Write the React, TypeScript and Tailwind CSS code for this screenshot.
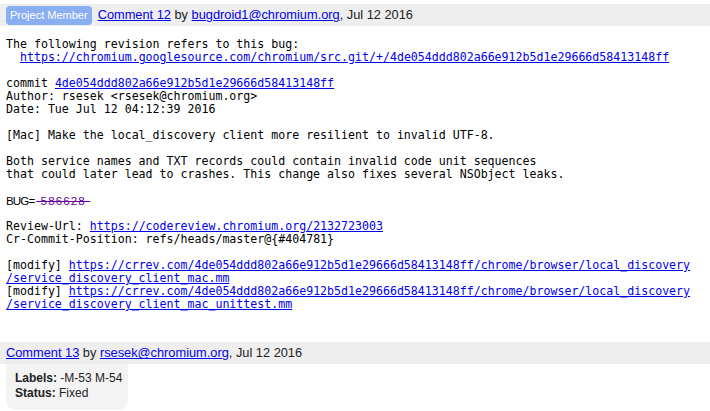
const mono = { fontFamily: '"DejaVu Sans Mono", monospace' }

function CommentHeader({
  number,
  author,
  badge,
}: {
  number: number
  author: string
  badge?: string
}) {
  return (
    <div className="flex h-[22px] items-center bg-[#eeeeee] px-[6px] text-[12.8px] text-[#222]">
      {badge && (
        <span className="mr-[6px] flex h-[19px] items-center rounded-[4px] bg-[#8aaef2] px-[4px] text-[11px] text-white">
          {badge}
        </span>
      )}
      <a href="#" className="text-[#0000ee] underline">
        Comment {number}
      </a>
      <span>&nbsp;by&nbsp;</span>
      <a href="#" className="text-[#0000ee] underline">
        {author}
      </a>
      <span>, Jul 12 2016</span>
    </div>
  )
}

function L({ children }: { children: React.ReactNode }) {
  return (
    <a href="#" className="text-[#0000ee] underline">
      {children}
    </a>
  )
}

export default function App() {
  const hash = '4de054ddd802a66e912b5d1e29666d58413148ff'
  return (
    <div
      className="h-[411px] w-[710px] overflow-hidden bg-white"
      style={{ fontFamily: '"Liberation Sans", Arial, sans-serif' }}
    >
      <div className="h-[4px]" />
      <CommentHeader number={12} author="bugdroid1@chromium.org" badge="Project Member" />
      <div
        className="px-[6px] pt-[12px] text-[11.6px] leading-[13px] whitespace-pre text-black"
        style={mono}
      >
        <div>The following revision refers to this bug:</div>
        <div>
          {'  '}
          <L>https://chromium.googlesource.com/chromium/src.git/+/{hash}</L>
        </div>
        <div>&nbsp;</div>
        <div>
          commit <L>{hash}</L>
        </div>
        <div>Author: rsesek &lt;rsesek@chromium.org&gt;</div>
        <div>Date: Tue Jul 12 04:12:39 2016</div>
        <div>&nbsp;</div>
        <div>[Mac] Make the local_discovery client more resilient to invalid UTF-8.</div>
        <div>&nbsp;</div>
        <div>Both service names and TXT records could contain invalid code unit sequences</div>
        <div>that could later lead to crashes. This change also fixes several NSObject leaks.</div>
        <div>&nbsp;</div>
        <div
          style={{ fontFamily: '"Liberation Sans", Arial, sans-serif' }}
          className="text-[11.6px]"
        >
          <span className="tracking-[-0.9px]">BUG=</span>
          <a href="#" className="pl-[2px] tracking-[1.1px] text-[#660099] line-through">
            {' 586628 '}
          </a>
        </div>
        <div>&nbsp;</div>
        <div>
          Review-Url: <L>https://codereview.chromium.org/2132723003</L>
        </div>
        <div>Cr-Commit-Position: refs/heads/master@{'{#404781}'}</div>
        <div>&nbsp;</div>
        <div>
          [modify] <L>https://crrev.com/{hash}/chrome/browser/local_discovery</L>
        </div>
        <div>
          <L>/service_discovery_client_mac.mm</L>
        </div>
        <div>
          [modify] <L>https://crrev.com/{hash}/chrome/browser/local_discovery</L>
        </div>
        <div>
          <L>/service_discovery_client_mac_unittest.mm</L>
        </div>
      </div>
      <div className="h-[31px]" />
      <CommentHeader number={13} author="rsesek@chromium.org" />
      <div className="ml-[6px] w-[122px] rounded-b-[10px] bg-[#f3f3f3] px-[9px] pt-[7px] pb-[9px] text-[12px] leading-[15px] whitespace-nowrap text-[#222]">
        <div>
          <b>Labels:</b> -M-53 M-54
        </div>
        <div>
          <b>Status:</b> Fixed
        </div>
      </div>
    </div>
  )
}
